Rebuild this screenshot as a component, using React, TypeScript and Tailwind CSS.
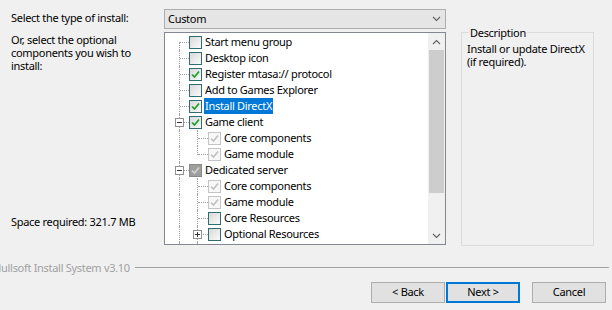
import React from 'react';

type CheckState = 'off' | 'on' | 'dim' | 'dark';

interface TreeRow {
  label: string;
  level: 0 | 1;
  state: CheckState;
  expander?: '-' | '+';
  selected?: boolean;
  // level-1 connector: 'mid' runs through, 'last' stops at the row centre
  branch?: 'mid' | 'last';
  // root connector starts at the centre of this row
  first?: boolean;
}

const rows: TreeRow[] = [
  { label: 'Start menu group', level: 0, state: 'off', first: true },
  { label: 'Desktop icon', level: 0, state: 'off' },
  { label: 'Register mtasa:// protocol', level: 0, state: 'on' },
  { label: 'Add to Games Explorer', level: 0, state: 'off' },
  { label: 'Install DirectX', level: 0, state: 'on', selected: true },
  { label: 'Game client', level: 0, state: 'on', expander: '-' },
  { label: 'Core components', level: 1, state: 'dim', branch: 'mid' },
  { label: 'Game module', level: 1, state: 'dim', branch: 'last' },
  { label: 'Dedicated server', level: 0, state: 'dark', expander: '-' },
  { label: 'Core components', level: 1, state: 'dim', branch: 'mid' },
  { label: 'Game module', level: 1, state: 'dim', branch: 'mid' },
  { label: 'Core Resources', level: 1, state: 'off', branch: 'mid' },
  { label: 'Optional Resources', level: 1, state: 'off', branch: 'mid', expander: '+' },
  // scrolled past the bottom edge, only the box top shows
  { label: '', level: 1, state: 'off', branch: 'mid' },
];

function Checkbox({ state }: { state: CheckState }) {
  const box =
    state === 'dim'
      ? 'border-[#c4c4c4] bg-[#f7f7f7]'
      : state === 'dark'
        ? 'border-[#8a8a8a] bg-[#9e9e9e]'
        : 'border-[#2e6e72] bg-gradient-to-br from-[#d8d8d8] to-[#fbfbfb]';
  const tick =
    state === 'on' ? '#1e9e2a' : state === 'dim' ? '#c2c2c2' : state === 'dark' ? '#d2d2d2' : null;
  return (
    <div className={`w-[13px] h-[13px] border shrink-0 flex items-center justify-center ${box}`}>
      {tick && (
        <svg width="11" height="11" viewBox="0 0 11 11">
          <path d="M2 5.5 L4.5 8 L9 2.5" fill="none" stroke={tick} strokeWidth="1.7" />
        </svg>
      )}
    </div>
  );
}

function Expander({ sign }: { sign: '-' | '+' }) {
  return (
    <div className="absolute top-[4px] w-[9px] h-[9px] border border-[#919191] bg-white flex items-center justify-center">
      <div className="relative w-[5px] h-[5px] flex items-center justify-center">
        <div className="w-[5px] h-px bg-[#333]" />
        {sign === '+' && <div className="absolute w-px h-[5px] bg-[#333]" />}
      </div>
    </div>
  );
}

function Row({ row }: { row: TreeRow }) {
  return (
    <div className="flex h-[16px] items-center">
      {/* root guide */}
      <div className="relative w-[24px] h-full shrink-0">
        <div
          className={`absolute left-[14px] bottom-0 border-l border-dotted border-[#a0a0a0] ${
            row.first ? 'top-[8px]' : 'top-0'
          }`}
        />
        {row.level === 0 && (
          <>
            <div className="absolute left-[15px] w-[9px] top-[8px] border-t border-dotted border-[#a0a0a0]" />
            {row.expander && (
              <div className="absolute left-[10px] top-0">
                <Expander sign={row.expander} />
              </div>
            )}
          </>
        )}
      </div>
      {row.level === 1 && (
        <div className="relative w-[19px] h-full shrink-0">
          <div
            className={`absolute left-[8px] top-0 border-l border-dotted border-[#a0a0a0] ${
              row.branch === 'last' ? 'h-[9px]' : 'bottom-0'
            }`}
          />
          <div className="absolute left-[9px] w-[10px] top-[8px] border-t border-dotted border-[#a0a0a0]" />
          {row.expander && (
            <div className="absolute left-[4px] top-0">
              <Expander sign={row.expander} />
            </div>
          )}
        </div>
      )}
      <Checkbox state={row.state} />
      {row.label && (
        <span
          className={`ml-[2px] px-[1px] h-full leading-[16px] whitespace-nowrap ${
            row.selected ? 'bg-[#0078d7] text-white' : ''
          }`}
        >
          {row.label}
        </span>
      )}
    </div>
  );
}

function Chevron({ up }: { up?: boolean }) {
  return (
    <svg width="9" height="6" viewBox="0 0 9 6">
      <path d={up ? 'M1 5 L4.5 1.5 L8 5' : 'M1 1 L4.5 4.5 L8 1'} fill="none" stroke="#606060" strokeWidth="1.1" />
    </svg>
  );
}

export default function App() {
  return (
    <div className="w-[612px] h-[310px] bg-[#f0f0f0] text-black text-[11px] tracking-[-0.3px] font-['Segoe_UI','Noto_Sans',sans-serif] overflow-hidden flex flex-col">
      <div className="flex h-[246px]">
        {/* Labels */}
        <div className="w-[164px] pl-[11px] flex flex-col leading-[13px] shrink-0">
          <div className="mt-[11px]">Select the type of install:</div>
          <div className="mt-[9px]">
            Or, select the optional
            <br />
            components you wish to
            <br />
            install:
          </div>
          <div className="mt-[143px]">Space required: 321.7 MB</div>
        </div>

        {/* Install type + component tree */}
        <div className="w-[282px] flex flex-col shrink-0">
          <div className="mt-[9px] h-[20px] border border-[#adadad] bg-[#e5e5e5] flex items-center justify-between pl-[3px] pr-[4px]">
            <span>Custom</span>
            <Chevron />
          </div>
          <div className="mt-[3px] h-[213px] border border-[#828790] bg-white flex overflow-hidden">
            <div className="flex-1 pt-px overflow-hidden">
              {rows.map((row, i) => (
                <Row key={i} row={row} />
              ))}
            </div>
            <div className="w-[17px] bg-[#f0f0f0] flex flex-col items-center">
              <div className="h-[17px] flex items-center justify-center">
                <Chevron up />
              </div>
              <div className="w-[15px] h-[143px] bg-[#cdcdcd]" />
              <div className="flex-1" />
              <div className="h-[17px] flex items-center justify-center">
                <Chevron />
              </div>
            </div>
          </div>
        </div>

        {/* Description */}
        <fieldset className="ml-[15px] mt-[26px] w-[133px] h-[220px] border border-[#dcdcdc] pl-[5px] pr-[3px] leading-[13px]">
          <legend className="ml-[2px] px-px">Description</legend>
          <div className="mt-[3px]">
            Install or update DirectX
            <br />
            (if required).
          </div>
        </fieldset>
      </div>

      {/* Branding line */}
      <div className="mt-[15px] h-[13px] flex items-center leading-[13px]">
        <span className="-ml-[7px] text-[#a0a0a0] whitespace-nowrap">Nullsoft Install System v3.10</span>
        <div className="flex-1 h-px bg-[#a0a0a0] ml-[5px] mr-[3px]" />
      </div>

      {/* Buttons */}
      <div className="mt-[8px] flex justify-end pr-[6px]">
        <button className="w-[74px] h-[21px] border border-[#adadad] bg-[#e1e1e1]">&lt; Back</button>
        <button className="ml-[1px] w-[74px] h-[21px] border-2 border-[#0078d7] bg-[#e1e1e1]">Next &gt;</button>
        <button className="ml-[12px] w-[74px] h-[21px] border border-[#adadad] bg-[#e1e1e1]">Cancel</button>
      </div>
    </div>
  );
}
